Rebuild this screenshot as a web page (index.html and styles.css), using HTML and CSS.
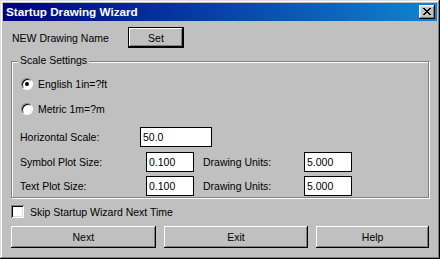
FILE: index.html
```html
<!DOCTYPE html>
<html lang="en">
<head>
    <meta charset="utf-8" />
    <title>Startup Drawing Wizard</title>
    <link rel="stylesheet" href="styles.css">
</head>
<body>
    <div class="window">
        <div class="titlebar">
            <span class="title">Startup Drawing Wizard</span>
            <button class="close-btn" type="button">
                <svg width="8" height="7" viewBox="0 0 8 7">
                    <path d="M0 0h2v1h1v1h2v-1h1v-1h2v1h-1v1h-1v1h-1v1h1v1h1v1h1v1h-2v-1h-1v-1h-2v1h-1v1h-2v-1h1v-1h1v-1h1v-1h-1v-1h-1v-1h-1z" fill="#000"/>
                </svg>
            </button>
        </div>
        <div class="content">
            <div class="name-row">
                <span class="name-label">NEW Drawing Name</span>
                <button class="btn btn-default set-btn" type="button">Set</button>
            </div>

            <div class="group">
                <span class="group-title">Scale Settings</span>
                <div class="row">
                    <span class="radio checked"></span>
                    <span class="radio-text">English 1in=?ft</span>
                </div>
                <div class="row">
                    <span class="radio"></span>
                    <span class="radio-text">Metric 1m=?m</span>
                </div>
                <div class="row row-gap">
                    <span class="label label-wide">Horizontal Scale:</span>
                    <input class="field field-wide" type="text" value="50.0">
                </div>
                <div class="row">
                    <span class="label label-plot">Symbol Plot Size:</span>
                    <input class="field field-small" type="text" value="0.100">
                    <span class="label label-units">Drawing Units:</span>
                    <input class="field field-small" type="text" value="5.000">
                </div>
                <div class="row row-last">
                    <span class="label label-plot">Text Plot Size:</span>
                    <input class="field field-small" type="text" value="0.100">
                    <span class="label label-units">Drawing Units:</span>
                    <input class="field field-small" type="text" value="5.000">
                </div>
            </div>

            <div class="check-row">
                <span class="checkbox"></span>
                <span class="check-text">Skip Startup Wizard Next Time</span>
            </div>

            <div class="button-row">
                <button class="btn btn-wide" type="button">Next</button>
                <button class="btn btn-wide" type="button">Exit</button>
                <button class="btn btn-help" type="button">Help</button>
            </div>
        </div>
    </div>
</body>
</html>
```

FILE: styles.css
```css
/* classic win9x dialog */
body {
    margin: 0;
    font-family: "Liberation Sans", Arial, sans-serif;
    font-size: 10.5px;
    color: #000;
    background: #c0c0c0;
}

.window {
    width: 440px;
    height: 259px;
    box-sizing: border-box;
    padding: 3px;
    background: #c0c0c0;
    box-shadow: inset -1px -1px #000, inset 1px 1px #dfdfdf, inset -2px -2px #808080, inset 2px 2px #fff;
}

.titlebar {
    height: 18px;
    display: flex;
    align-items: center;
    justify-content: space-between;
    padding: 0 2px 0 3px;
    background: linear-gradient(to right, #000080, #1084d0);
}

.title {
    color: #fff;
    font-weight: bold;
    font-size: 11.7px;
    line-height: 18px;
}

.close-btn {
    width: 16px;
    height: 14px;
    padding: 0;
    border: none;
    background: #c0c0c0;
    display: flex;
    align-items: center;
    justify-content: center;
    box-shadow: inset -1px -1px #000, inset 1px 1px #fff, inset -2px -2px #808080, inset 2px 2px #dfdfdf;
}

.close-btn svg {
    display: block;
    margin: 0 0 1px 0;
}

.content {
    padding: 6px 8px 0 8px;
}

.name-row {
    display: flex;
    align-items: center;
    height: 21px;
}

.name-label {
    width: 116px;
    padding-left: 1px;
}

.btn {
    font-family: "Liberation Sans", Arial, sans-serif;
    font-size: 10.5px;
    color: #000;
    background: #c0c0c0;
    border: none;
    padding: 0;
    box-shadow: inset -1px -1px #000, inset 1px 1px #fff, inset -2px -2px #808080;
}

.btn-default {
    box-shadow: inset 0 0 0 1px #000, inset -2px -2px #000, inset 2px 2px #fff, inset -3px -3px #808080;
}

.set-btn {
    width: 56px;
    height: 21px;
}

.group {
    position: relative;
    box-sizing: border-box;
    height: 137px;
    margin-top: 13px;
    padding: 9px 0 0 0;
    border: 1px solid #808080;
    box-shadow: inset 1px 1px #fff, 1px 1px #fff;
}

.group-title {
    position: absolute;
    top: -8px;
    left: 6px;
    padding: 0 2px;
    line-height: 13px;
    background: #c0c0c0;
}

.row {
    display: flex;
    align-items: center;
    height: 25px;
    padding-left: 8px;
}

.row-gap {
    margin-top: 3px;
}

.row-last {
    height: 23px;
}

.radio {
    position: relative;
    width: 12px;
    height: 12px;
    box-sizing: border-box;
    margin-left: 1px;
    margin-right: 5px;
    border-radius: 50%;
    background: #fff;
    border: 1px solid;
    border-color: #808080 #fff #fff #808080;
    box-shadow: inset 1px 1px #000;
}

.radio.checked::after {
    content: "";
    position: absolute;
    left: 3px;
    top: 3px;
    width: 4px;
    height: 4px;
    border-radius: 50%;
    background: #000;
}

.label-wide {
    width: 120px;
}

.label-plot {
    width: 126px;
}

.label-units {
    width: 101px;
    padding-left: 9px;
}

.field {
    box-sizing: border-box;
    height: 20px;
    padding: 0 2px;
    border: 1px solid #000;
    background: #fff;
    font-family: "Liberation Sans", Arial, sans-serif;
    font-size: 10.5px;
    color: #000;
    outline: none;
}

.field-wide {
    width: 72px;
}

.field-small {
    width: 48px;
}

.check-row {
    display: flex;
    align-items: center;
    height: 13px;
    margin-top: 7px;
}

.checkbox {
    width: 13px;
    height: 13px;
    box-sizing: border-box;
    margin-right: 6px;
    background: #fff;
    box-shadow: inset 1px 1px #808080, inset -1px -1px #fff, inset 2px 2px #000, inset -2px -2px #dfdfdf;
}

.button-row {
    display: flex;
    gap: 8px;
    margin-top: 8px;
}

.btn-wide {
    width: 145px;
    height: 22px;
}

.btn-help {
    width: 113px;
    height: 22px;
}
```
